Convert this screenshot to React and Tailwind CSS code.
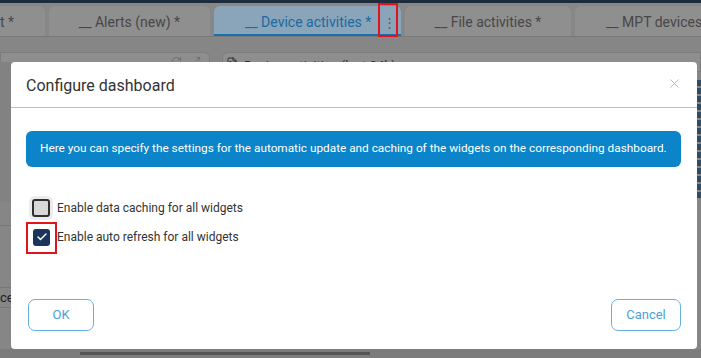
import { X, Check, RefreshCw, Maximize2, FileText } from "lucide-react";

function Tab({ label, width, active, className = "" }) {
  return (
    <div
      className={`relative flex h-[30px] shrink-0 items-center justify-center rounded-t-[6px] pt-[3px] text-[14px] ${
        active ? "bg-[#8aa4b9] text-[#1b6aa0]" : "bg-[#8f8f8f] text-[#474747]"
      } ${className}`}
      style={{ width }}
    >
      {label}
      {active && <div className="absolute bottom-0 left-0 right-0 h-[2px] bg-[#1b6fae]" />}
    </div>
  );
}

export default function App() {
  return (
    <div
      className="relative h-[358px] w-[701px] overflow-hidden bg-[#868686]"
      style={{ fontFamily: "Roboto, 'Liberation Sans', sans-serif" }}
    >
      {/* top bar */}
      <div className="h-[3px] bg-[#1d2c3c]" />

      {/* tab strip */}
      <div className="flex h-[34px] items-end gap-[4px] border-b border-[#7a7a7a] bg-[#878787]">
        <div className="flex h-[30px] w-[45px] shrink-0 items-center rounded-tr-[6px] bg-[#8f8f8f] pt-[3px] text-[14px] text-[#474747]">
          t *
        </div>
        <Tab label="__ Alerts (new) *" width={161} />
        <div className="relative flex h-[30px] w-[187px] shrink-0 items-center rounded-t-[6px] bg-[#8aa4b9] pl-[31px] pt-[3px] text-[14px] text-[#1b6aa0]">
          __ Device activities *
          <span className="ml-[12px] text-[13px] leading-none text-[#4f5f6c]">⋮</span>
          <div className="absolute bottom-0 left-0 right-0 h-[2px] bg-[#1b6fae]" />
          <div className="absolute left-[164px] top-[-3px] h-[34px] w-[20px] border-2 border-[#e0141a]" />
        </div>
        <Tab label="__ File activities *" width={166} />
        <Tab label="__ MPT devices" width={150} className="justify-start pl-[31px]" />
      </div>

      {/* widget headers row */}
      <div className="flex gap-[12px] pt-[15px]">
        <div className="flex h-[20px] w-[210px] items-start justify-end gap-[8px] rounded-tr-[6px] border border-[#7d7d7d] bg-[#8e8e8e] pr-[8px] pt-[3px] text-[#6c6c6c]">
          <RefreshCw size={11} strokeWidth={2} />
          <Maximize2 size={11} strokeWidth={2} />
        </div>
        <div className="flex h-[20px] flex-1 items-start gap-[6px] rounded-tl-[6px] border border-[#7d7d7d] bg-[#8e8e8e] pl-[3px] pt-[3px] text-[13px] text-[#2e2e2e]">
          <FileText size={12} className="mt-[1px]" />
          Device activities (last 24h)
        </div>
      </div>

      {/* left background strip */}
      <div className="absolute left-0 top-[62px] h-[287px] w-[11px]">
        <div className="h-[140px] bg-[#828282]" />
        <div className="h-[24px] border-b border-[#777]" />
        <div className="h-[62px] border-b border-[#777]" />
        <div className="flex h-[20px] items-center border-b border-[#777] text-[13px] text-[#222]">ce</div>
      </div>

      {/* right background strip */}
      <div className="absolute right-0 top-[80px] flex w-[4px] flex-col gap-[2px]">
        {[0, 1, 2, 3, 4, 5, 6, 7, 8, 9, 10, 11, 12, 13, 14].map((i) => (
          <div key={i} className="h-[6px] bg-[#2c4d68]" />
        ))}
      </div>

      {/* bottom background strip */}
      <div className="absolute bottom-0 left-0 right-0 flex h-[9px] items-center bg-[#7c7c7c] pl-[80px]">
        <div className="h-[3px] w-[290px] bg-[#555]" />
      </div>

      {/* modal */}
      <div className="absolute left-[11px] top-[62px] flex h-[287px] w-[686px] flex-col rounded-[4px] bg-white">
        <div className="flex h-[46px] items-center justify-between border-b border-[#b9c2cc] pl-[15px] pr-[15px] pt-[3px]">
          <span className="text-[16px] text-[#333]">Configure dashboard</span>
          <X size={15} strokeWidth={1.4} className="mb-[5px] text-[#a7b2be]" />
        </div>

        <div className="flex flex-1 flex-col pl-[15px] pr-[16px] pt-[23px]">
          <div className="flex h-[36px] items-center rounded-[6px] bg-[#0b84c9] pl-[14px] text-[11.8px] text-white">
            Here you can specify the settings for the automatic update and caching of the widgets on the corresponding dashboard.
          </div>

          <div className="mt-[32px] flex items-center gap-[7px] pl-[6px]">
            <div className="flex h-[18px] w-[18px] items-center justify-center rounded-[3px] border-2 border-[#2f2f2f] bg-[#d8d8d8] shadow-[0_0_0_3px_#ececec]" />
            <span className="text-[12px] text-[#333]">Enable data caching for all widgets</span>
          </div>

          <div className="relative mt-[11px] flex items-center gap-[7px] pl-[7px]">
            <div className="flex h-[17px] w-[17px] items-center justify-center rounded-[3px] bg-[#1b3459]">
              <Check size={12} strokeWidth={3} className="text-white" />
            </div>
            <span className="text-[12px] text-[#333]">Enable auto refresh for all widgets</span>
            <div className="absolute left-0 top-[-6px] h-[32px] w-[31px] border-2 border-[#e0141a]" />
          </div>

          <div className="mt-auto mb-[18px] flex items-center justify-between pl-[2px]">
            <button className="h-[32px] w-[66px] rounded-[7px] border-[1.5px] border-[#62b1e2] text-[13px] text-[#4aa2dc]">
              OK
            </button>
            <button className="h-[32px] w-[70px] rounded-[7px] border-[1.5px] border-[#62b1e2] text-[13px] text-[#4aa2dc]">
              Cancel
            </button>
          </div>
        </div>
      </div>
    </div>
  );
}
